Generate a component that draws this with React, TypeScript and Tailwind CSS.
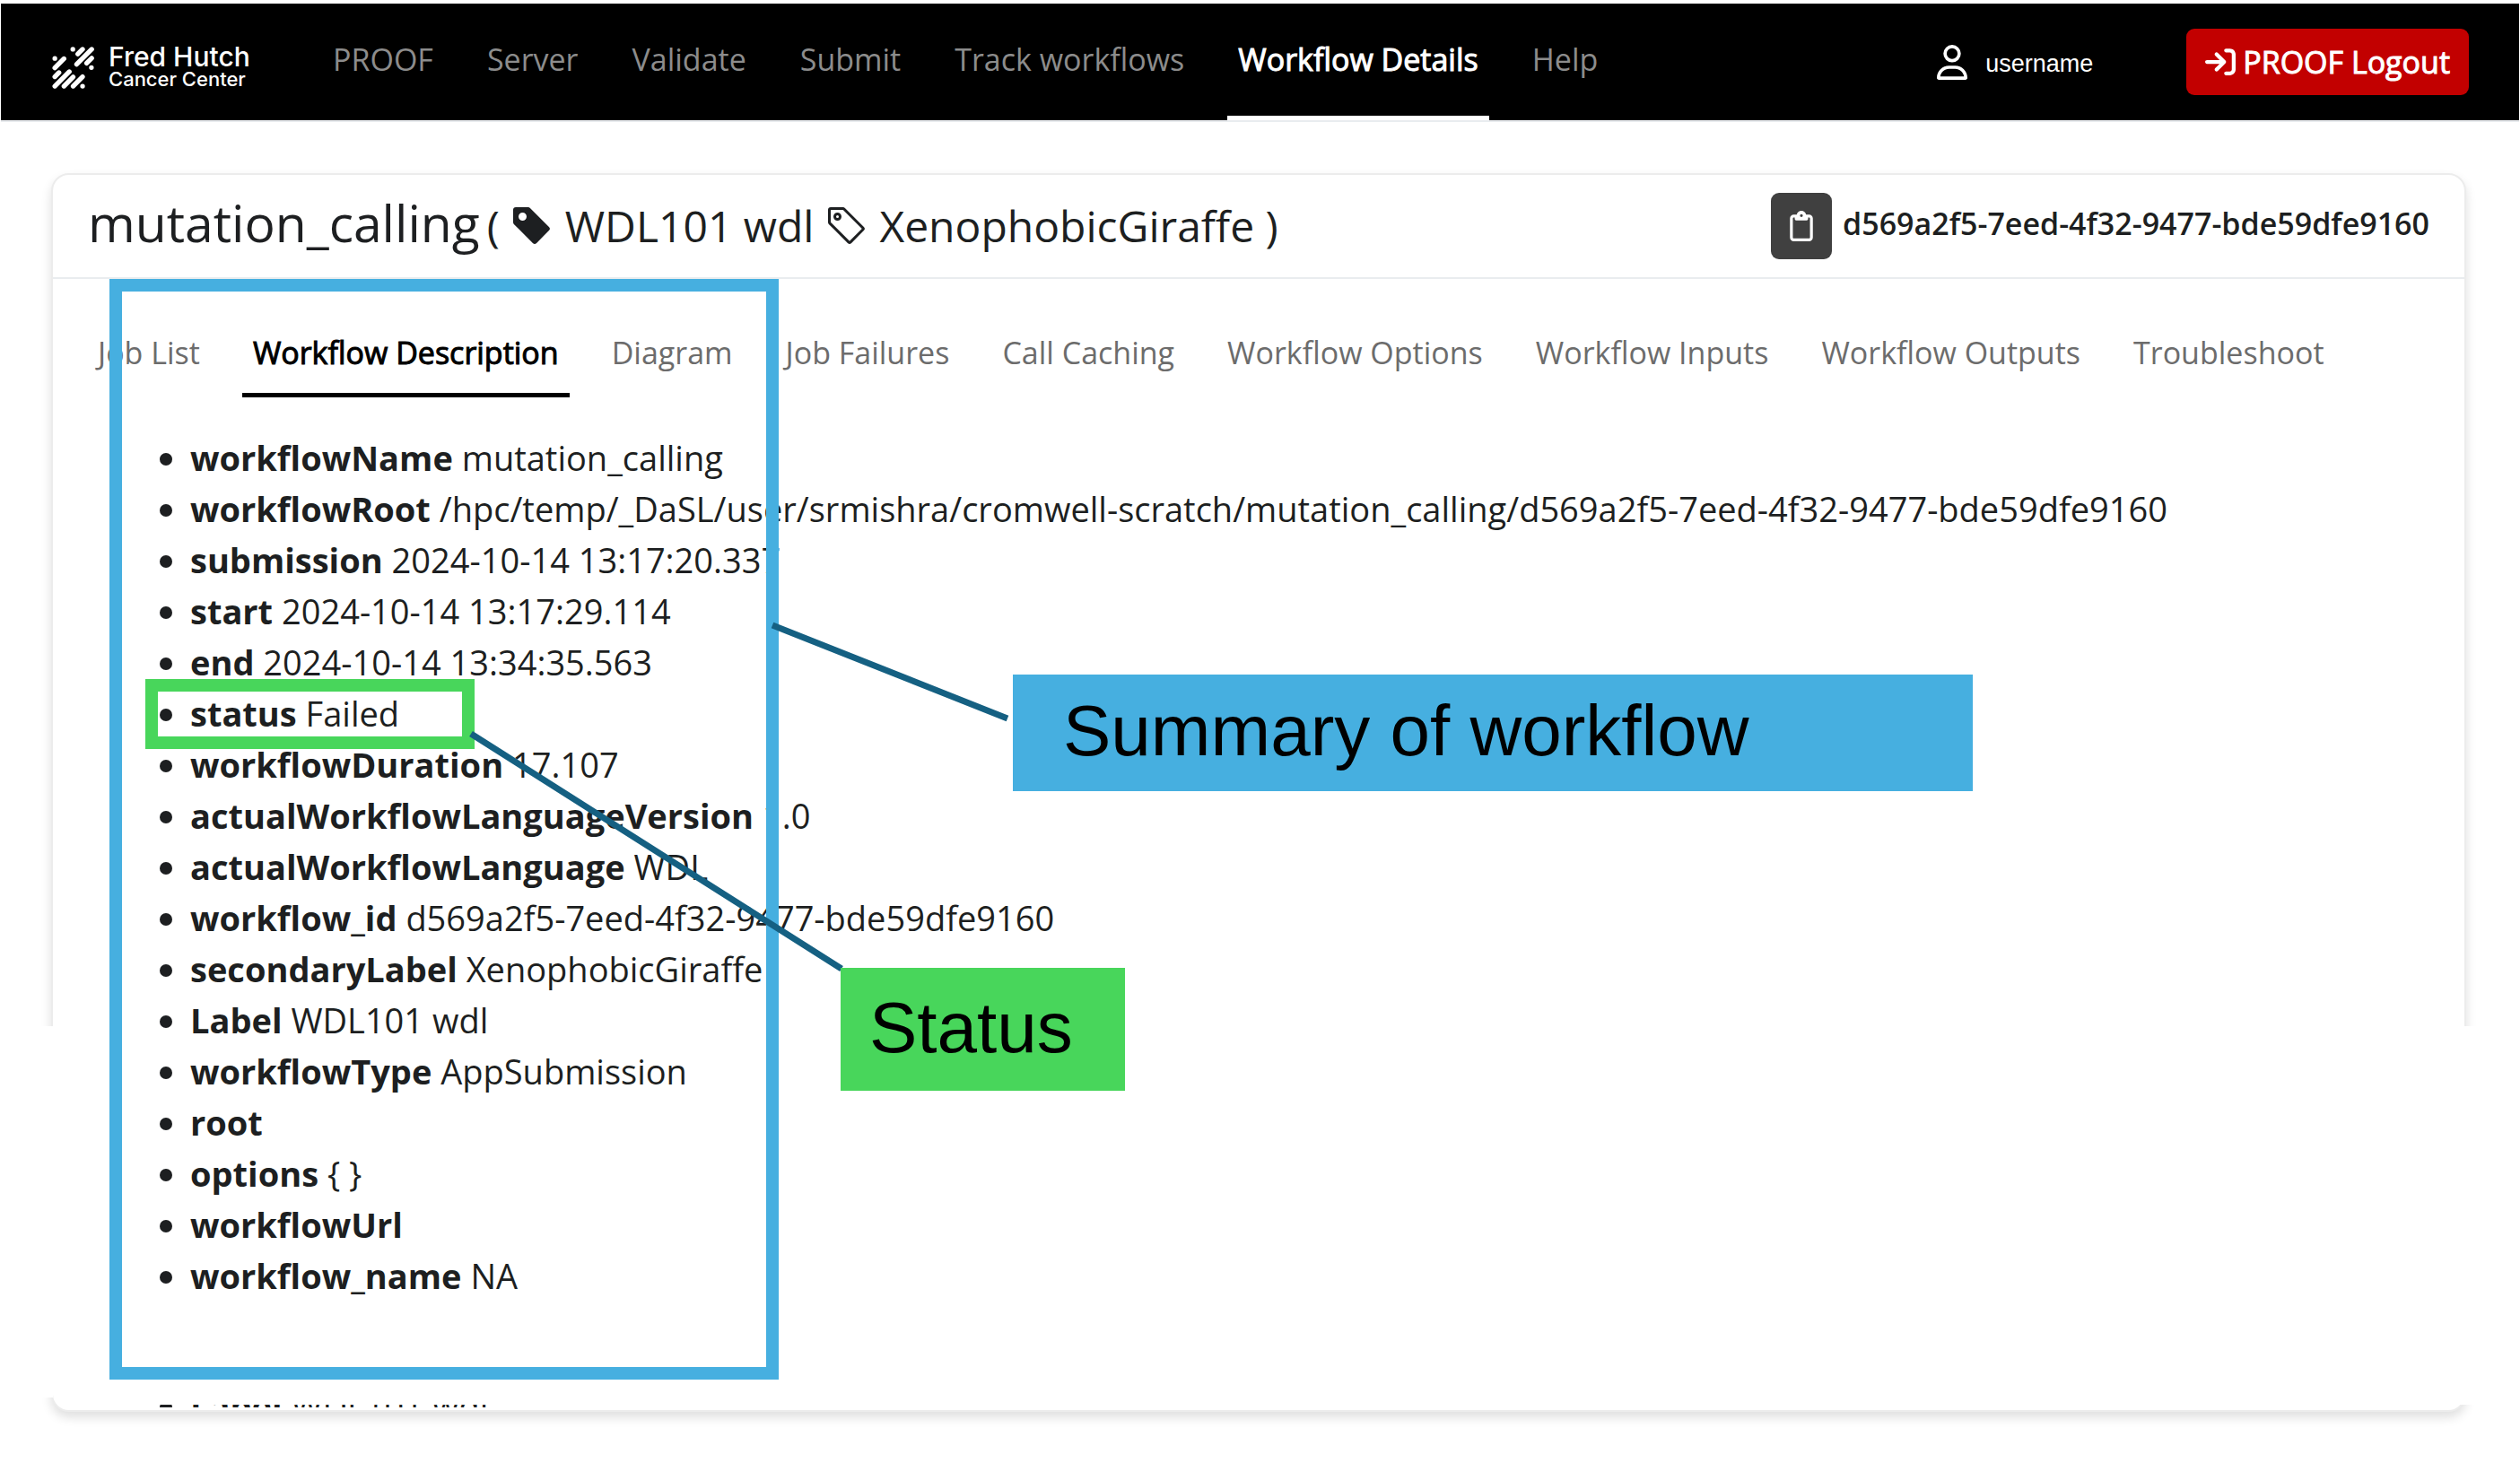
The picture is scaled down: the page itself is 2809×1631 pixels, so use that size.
import React from "react";
import { FaRegUser, FaArrowRightToBracket, FaRegClipboard } from "react-icons/fa6";
import { BsTag, BsTagFill } from "react-icons/bs";

const NAV_LINKS = ["PROOF", "Server", "Validate", "Submit", "Track workflows", "Workflow Details", "Help"];

const TABS = [
  "Job List",
  "Workflow Description",
  "Diagram",
  "Job Failures",
  "Call Caching",
  "Workflow Options",
  "Workflow Inputs",
  "Workflow Outputs",
  "Troubleshoot",
];

const DETAILS: [string, string][] = [
  ["workflowName", "mutation_calling"],
  ["workflowRoot", "/hpc/temp/_DaSL/user/srmishra/cromwell-scratch/mutation_calling/d569a2f5-7eed-4f32-9477-bde59dfe9160"],
  ["submission", "2024-10-14 13:17:20.337"],
  ["start", "2024-10-14 13:17:29.114"],
  ["end", "2024-10-14 13:34:35.563"],
  ["status", "Failed"],
  ["workflowDuration", "17.107"],
  ["actualWorkflowLanguageVersion", "1.0"],
  ["actualWorkflowLanguage", "WDL"],
  ["workflow_id", "d569a2f5-7eed-4f32-9477-bde59dfe9160"],
  ["secondaryLabel", "XenophobicGiraffe"],
  ["Label", "WDL101 wdl"],
  ["workflowType", "AppSubmission"],
  ["root", ""],
  ["options", "{ }"],
  ["workflowUrl", ""],
  ["workflow_name", "NA"],
];

function Logo() {
  return (
    <a href="#home" className="flex items-center gap-4 text-white">
      <svg viewBox="55 62 142 143" className="size-[47px]" fill="none" stroke="currentColor" strokeWidth="16" strokeLinecap="round" aria-hidden="true">
        <path d="M125 71h.1M142 87l16-16M138 122l51-51M172 118l17-17M188 133h.1" />
        <path d="M64 102h.1M64 134l31-31M64 164l14-14M64 196l49-49M95 196l31-31M126 196l32-32M158 196h.1" />
      </svg>
      <span className="flex flex-col font-['Inter',sans-serif] font-medium">
        <span className="text-[30px] leading-[26px]">Fred Hutch</span>
        <span className="text-[22px] leading-[24px]">Cancer Center</span>
      </span>
    </a>
  );
}

function NavBar() {
  return (
    <header className="mx-px flex h-[130px] items-stretch bg-black pr-[56px] pl-[57px] shadow-[0_2px_0_#e9ecef]">
      <div className="flex w-[301px] items-center pt-3">
        <Logo />
      </div>
      <nav className="flex gap-9 text-[34px]">
        {NAV_LINKS.map((label) => (
          <a
            key={label}
            href="#nav"
            className={
              label === "Workflow Details"
                ? "flex items-center border-b-[5px] border-white px-3 text-white [-webkit-text-stroke:1px_white]"
                : "flex items-center border-b-[5px] border-transparent px-3 text-[#8c8c8c]"
            }
          >
            {label}
          </a>
        ))}
      </nav>
      <div className="ml-auto flex items-center text-white">
        <FaRegUser className="h-[39px] w-[34px]" />
        <span className="mr-[104px] ml-[20px] pt-1 font-['Liberation_Sans',sans-serif] text-[27px]">username</span>
        <button className="flex h-[74px] items-center gap-2 rounded-[9px] bg-[#c20000] px-[21px] text-[34px] whitespace-nowrap [-webkit-text-stroke:1px_white]">
          <FaArrowRightToBracket className="size-[34px]" />
          PROOF Logout
        </button>
      </div>
    </header>
  );
}

function CardHeader() {
  return (
    <div className="flex items-center justify-between border-b-2 border-[#e9ecef] py-5 pr-[39px] pl-[39px]">
      <h1 className="pb-1 text-[48px] leading-[60px] whitespace-nowrap">
        <span className="mr-2 text-[57px]">mutation_calling</span>
        ( <BsTagFill className="inline align-[-6px]" /> WDL101 wdl <BsTag className="inline align-[-6px]" /> XenophobicGiraffe )
      </h1>
      <div className="flex items-center gap-3">
        <button aria-label="Copy workflow id" className="flex h-[74px] w-[68px] items-center justify-center rounded-[9px] bg-[#404040] text-white">
          <FaRegClipboard className="h-[34px] w-[26px]" />
        </button>
        <span className="pb-[6px] text-[34px] font-semibold">d569a2f5-7eed-4f32-9477-bde59dfe9160</span>
      </div>
    </div>
  );
}

function Tabs() {
  return (
    <div role="tablist" className="flex gap-[35px] text-[34px] leading-[51px] whitespace-nowrap">
      {TABS.map((label) => (
        <button
          key={label}
          role="tab"
          aria-selected={label === "Workflow Description"}
          className={
            label === "Workflow Description"
              ? "border-b-[5px] border-black px-3 py-[19px] text-black [-webkit-text-stroke:1px_black]"
              : "border-b-[5px] border-transparent px-3 py-[19px] text-[#6c6c6c]"
          }
        >
          {label}
        </button>
      ))}
    </div>
  );
}

function DetailItem({ name, value }: { name: string; value: string }) {
  return (
    <li>
      <strong className="font-bold">{name}</strong> {value}
    </li>
  );
}

function Annotations() {
  return (
    <>
      <div className="absolute top-[311px] left-[122px] h-[1227px] w-[746px] border-[14px] border-[#46afe0]" />
      <div className="absolute top-[757px] left-[162px] h-[78px] w-[367px] border-[14px] border-[#48d65b]" />
      <svg className="absolute top-[690px] left-[520px] h-[400px] w-[610px]" viewBox="520 690 610 400" stroke="#156082" strokeWidth="7" aria-hidden="true">
        <path d="M861 697L1123 801M525 818L938 1080" />
      </svg>
      <div className="absolute top-[752px] left-[1129px] flex h-[130px] w-[1070px] items-center bg-[#46afe0] pb-1 pl-[56px] font-['Liberation_Sans',sans-serif] text-[80px] leading-none text-black">
        Summary of workflow
      </div>
      <div className="absolute top-[1079px] left-[937px] flex h-[137px] w-[317px] items-center bg-[#48d65b] pb-1 pl-[32px] font-['Liberation_Sans',sans-serif] text-[80px] leading-none text-black">
        Status
      </div>
    </>
  );
}

export default function App() {
  return (
    <div className="relative min-h-screen bg-white pt-1 pb-[60px] font-['Open_Sans',sans-serif] text-[#1d1f21]">
      <NavBar />
      <main className="relative mr-[60px] ml-[57px] mt-[59px] rounded-[20px] border-2 border-[#ececec] bg-white shadow-[0_6px_12px_rgba(0,0,0,0.13)]">
        <div className="absolute top-[949px] -left-[20px] bottom-[14px] w-[20px] bg-white" />
        <div className="absolute top-[949px] -right-[20px] bottom-[6px] w-[26px] bg-white" />
        <CardHeader />
        <div className="px-[38px] pt-[38px]">
          <Tabs />
          <ul className="mt-[39px] list-disc pl-[115px] text-[38px] leading-[57px] whitespace-nowrap">
            {DETAILS.map(([name, value]) => (
              <DetailItem key={name} name={name} value={value} />
            ))}
          </ul>
          <div aria-hidden="true" className="mt-[115px] h-[6px]">
            <div className="flex h-[3px] items-center overflow-hidden">
              <ul className="list-disc pl-[115px] text-[38px] leading-[57px] whitespace-nowrap">
                <DetailItem name="Label" value="WDL101 wdl" />
              </ul>
            </div>
          </div>
        </div>
      </main>
      <Annotations />
    </div>
  );
}
